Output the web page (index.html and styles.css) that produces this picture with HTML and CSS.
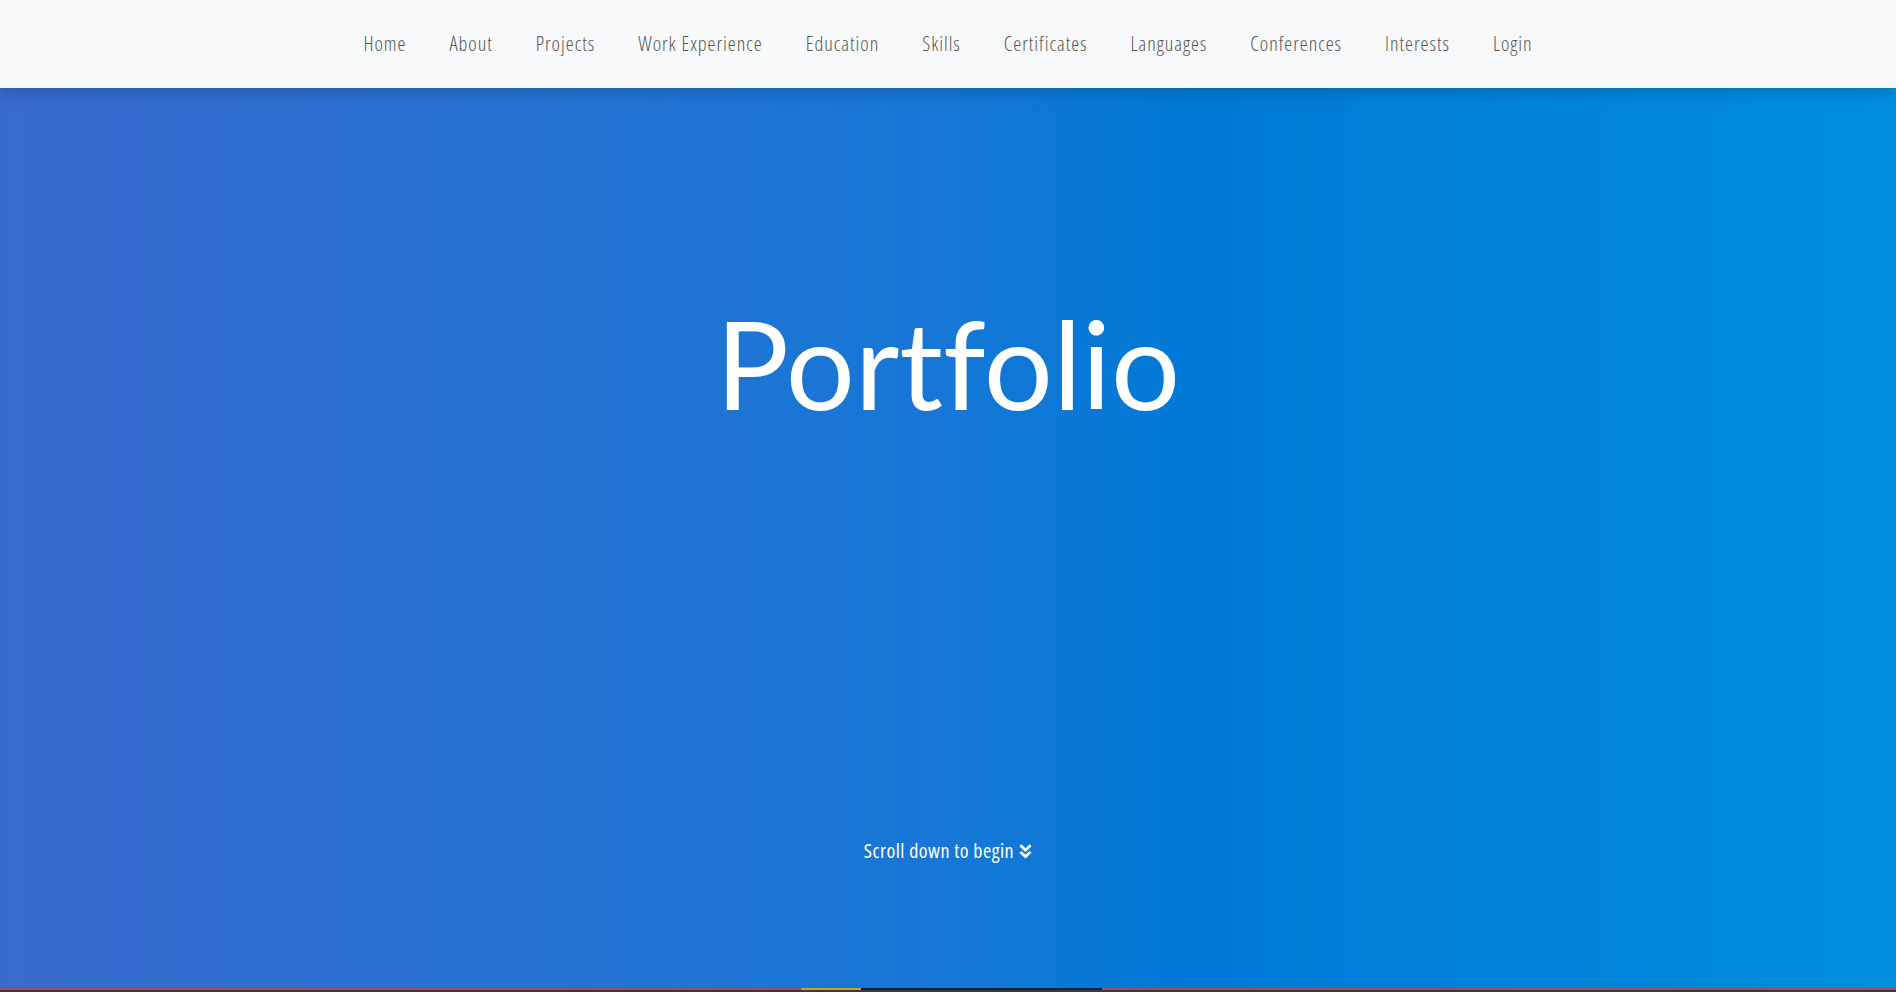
FILE: index.html
```html
<!DOCTYPE html>
<html lang="en">
<head>
<meta charset="utf-8">
<title>Portfolio</title>
<link rel="stylesheet" href="styles.css">
</head>
<body>
<nav class="navbar">
  <ul class="nav-list">
    <li><a class="nav-link" href="#">Home</a></li>
    <li><a class="nav-link" href="#">About</a></li>
    <li><a class="nav-link" href="#">Projects</a></li>
    <li><a class="nav-link" href="#">Work Experience</a></li>
    <li><a class="nav-link" href="#">Education</a></li>
    <li><a class="nav-link" href="#">Skills</a></li>
    <li><a class="nav-link" href="#">Certificates</a></li>
    <li><a class="nav-link" href="#">Languages</a></li>
    <li><a class="nav-link" href="#">Conferences</a></li>
    <li><a class="nav-link" href="#">Interests</a></li>
    <li><a class="nav-link" href="#">Login</a></li>
  </ul>
</nav>
<header class="hero">
  <h1 class="hero-title">Portfolio</h1>
  <p class="hero-scroll">Scroll down to begin
    <svg class="chev" viewBox="0 0 12 14" width="13" height="15" aria-hidden="true">
      <path d="M1.2 1.2 L6 5.6 L10.8 1.2" fill="none" stroke="#fff" stroke-width="2.6" stroke-linejoin="miter"/>
      <path d="M1.2 7.4 L6 11.8 L10.8 7.4" fill="none" stroke="#fff" stroke-width="2.6" stroke-linejoin="miter"/>
    </svg>
  </p>
</header>
<div class="progress">
  <span class="seg seg-a"></span><span class="seg seg-b"></span><span class="seg seg-c"></span><span class="seg seg-d"></span>
</div>
<div class="under"></div>
</body>
</html>
```

FILE: styles.css
```css
html, body {
  margin: 0;
  padding: 0;
}
body {
  font-family: "Open Sans", "Liberation Sans Narrow", sans-serif;
  overflow: hidden;
  background: #3a3a3a;
}
.navbar {
  height: 88px;
  background: #f8f9fa;
  display: flex;
  align-items: center;
  justify-content: center;
  position: relative;
  z-index: 2;
  box-shadow: 0 4px 14px rgba(0, 0, 0, 0.18);
}
.nav-list {
  list-style: none;
  margin: 0;
  padding: 0 0 2px 0;
  display: flex;
  gap: 43px;
}
.nav-link {
  font-family: "Open Sans", sans-serif;
  font-stretch: 87%;
  font-weight: 300;
  font-size: 20px;
  letter-spacing: 1px;
  color: #555;
  text-decoration: none;
}
.hero {
  height: 900px;
  background: linear-gradient(to right, #386bcd 0%, #1677d6 50%, #0079d6 63%, #008ee0 100%);
  display: flex;
  flex-direction: column;
  align-items: center;
  color: #fff;
  position: relative;
  z-index: 1;
}
.hero-title {
  margin: 185px 0 0 0;
  font-family: Lato, sans-serif;
  font-weight: 400;
  font-size: 122px;
  line-height: 180px;
  letter-spacing: 0;
  font-variant-ligatures: none;
}
.hero-scroll {
  margin: 386px 0 0 0;
  font-family: "Open Sans", sans-serif;
  font-stretch: 85%;
  font-weight: 400;
  font-size: 20px;
  line-height: 24px;
  letter-spacing: 0.5px;
  display: flex;
  align-items: center;
  gap: 5px;
}
.chev {
  display: block;
}
.progress {
  height: 2px;
  display: flex;
  background: #a04e5e;
}
.seg { display: block; height: 2px; }
.seg-a { width: 801px; background: #a04e5e; }
.seg-b { width: 60px; background: #d0a020; }
.seg-c { width: 241px; background: #0c2340; }
.seg-d { flex: 1; background: #a04e5e; }
.under {
  height: 2px;
  background: #3a3a3a;
}
```
